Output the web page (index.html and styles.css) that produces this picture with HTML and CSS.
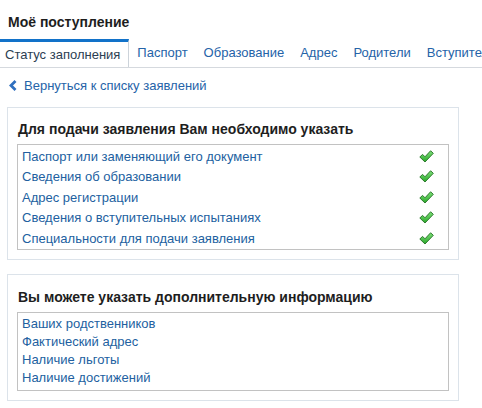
FILE: index.html
```html
<!DOCTYPE html>
<html lang="ru">
<head>
<meta charset="utf-8">
<title>Моё поступление</title>
<link rel="stylesheet" href="styles.css">
</head>
<body>
<div class="page">
  <h1 class="title">Моё поступление</h1>
  <nav class="tabs">
    <a class="tab active">Статус заполнения</a>
    <a class="tab">Паспорт</a>
    <a class="tab">Образование</a>
    <a class="tab">Адрес</a>
    <a class="tab">Родители</a>
    <a class="tab">Вступительные испытания</a>
  </nav>
  <a class="back">
    <svg class="chev" width="8" height="11" viewBox="0 0 8 11"><polyline points="6.5,1 2,5.5 6.5,10" fill="none" stroke="#2f6fbf" stroke-width="2.8" stroke-linejoin="miter"/></svg>
    <span>Вернуться к списку заявлений</span>
  </a>

  <section class="panel">
    <h2 class="panel-title">Для подачи заявления Вам необходимо указать</h2>
    <ul class="list list-check">
      <li><span>Паспорт или заменяющий его документ</span><svg class="ok" width="15" height="13" viewBox="0 0 15 13"><defs><linearGradient id="g" x1="0" y1="0" x2="0" y2="1"><stop offset="0" stop-color="#7fe07a"/><stop offset="1" stop-color="#2aa82a"/></linearGradient></defs><path d="M0.8,7 L3.6,4.4 L6,6.8 L11.6,0.8 L14.3,3.3 L6,12 Z" fill="url(#g)" stroke="#2f7a2f" stroke-width="1" stroke-linejoin="round"/></svg></li>
      <li><span>Сведения об образовании</span><svg class="ok" width="15" height="13" viewBox="0 0 15 13"><path d="M0.8,7 L3.6,4.4 L6,6.8 L11.6,0.8 L14.3,3.3 L6,12 Z" fill="url(#g)" stroke="#2f7a2f" stroke-width="1" stroke-linejoin="round"/></svg></li>
      <li><span>Адрес регистрации</span><svg class="ok" width="15" height="13" viewBox="0 0 15 13"><path d="M0.8,7 L3.6,4.4 L6,6.8 L11.6,0.8 L14.3,3.3 L6,12 Z" fill="url(#g)" stroke="#2f7a2f" stroke-width="1" stroke-linejoin="round"/></svg></li>
      <li><span>Сведения о вступительных испытаниях</span><svg class="ok" width="15" height="13" viewBox="0 0 15 13"><path d="M0.8,7 L3.6,4.4 L6,6.8 L11.6,0.8 L14.3,3.3 L6,12 Z" fill="url(#g)" stroke="#2f7a2f" stroke-width="1" stroke-linejoin="round"/></svg></li>
      <li><span>Специальности для подачи заявления</span><svg class="ok" width="15" height="13" viewBox="0 0 15 13"><path d="M0.8,7 L3.6,4.4 L6,6.8 L11.6,0.8 L14.3,3.3 L6,12 Z" fill="url(#g)" stroke="#2f7a2f" stroke-width="1" stroke-linejoin="round"/></svg></li>
    </ul>
  </section>

  <section class="panel panel-2">
    <h2 class="panel-title">Вы можете указать дополнительную информацию</h2>
    <ul class="list list-plain">
      <li>Ваших родственников</li>
      <li>Фактический адрес</li>
      <li>Наличие льготы</li>
      <li>Наличие достижений</li>
    </ul>
  </section>
</div>
</body>
</html>
```

FILE: styles.css
```css
html, body {
  margin: 0;
  padding: 0;
  background: #ffffff;
}
body {
  font-family: "Liberation Sans", Arial, sans-serif;
  font-size: 13px;
  color: #333;
  overflow: hidden;
}
.page {
  width: 482px;
}
.title {
  margin: 0;
  padding: 14px 0 0 8px;
  height: 25px;
  font-size: 14px;
  line-height: 16px;
  font-weight: bold;
  color: #1e1e1e;
}
.tabs {
  display: flex;
  white-space: nowrap;
  overflow: hidden;
  border-bottom: 1px solid #d5d9de;
  height: 28px;
}
.tab {
  display: block;
  flex: none;
  padding: 0 8px;
  line-height: 28px;
  color: #2563a8;
  cursor: pointer;
}
.tab.active {
  padding: 0 8px 0 5px;
  border-top: 3px solid #1272c9;
  border-right: 1px solid #ccd3da;
  line-height: 25px;
  height: 26px;
  background: #fff;
  color: #2c3e52;
  margin-bottom: -1px;
}
.back {
  display: flex;
  align-items: center;
  gap: 7px;
  margin: 9px 0 0 9px;
  height: 16px;
  color: #2563a8;
}
.chev {
  display: block;
}
.panel {
  margin: 14px 0 0 7px;
  width: 432px;
  border: 1px solid #dce3ea;
  padding: 13px 9px 9px 9px;
}
.panel-2 {
  padding-top: 14px;
}
.panel-title {
  margin: 0 0 7px 1px;
  font-size: 14px;
  line-height: 16px;
  font-weight: bold;
  color: #1e1e1e;
}
.list {
  list-style: none;
  margin: 0;
  border: 1px solid #c2c2c2;
  padding: 0 14px 0 4px;
}
.list li {
  color: #225f9f;
}
.list-check {
  padding-top: 1px;
}
.list-check li {
  display: flex;
  align-items: center;
  justify-content: space-between;
  height: 20.5px;
}
.ok {
  display: block;
}
.list-plain {
  padding-top: 2px;
  padding-bottom: 3px;
}
.list-plain li {
  line-height: 18px;
}
```
